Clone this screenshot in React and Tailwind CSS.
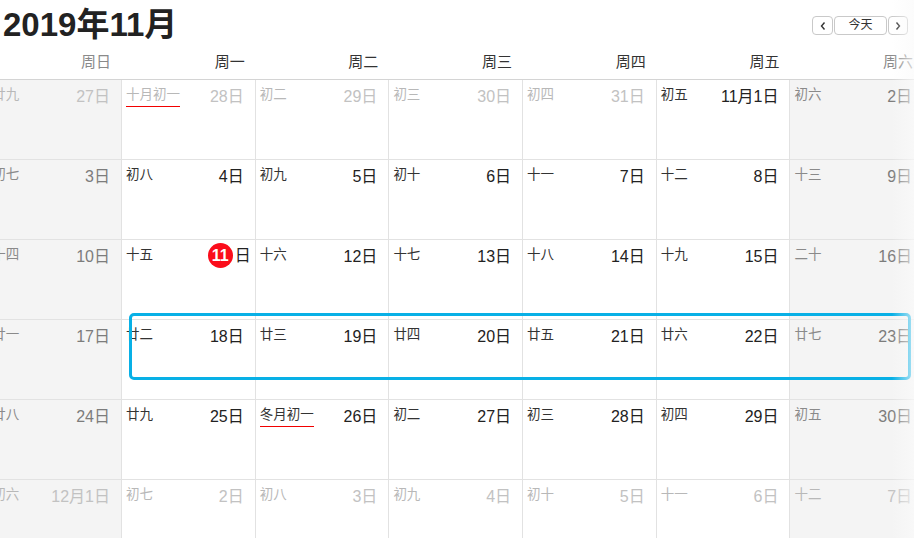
import React from "react";

const weekdays = ["周日", "周一", "周二", "周三", "周四", "周五", "周六"];

// [lunar, date, inMonth, mark]
const weeks = [
  [["廿九", "27日", false], ["十月初一", "28日", false, "line"], ["初二", "29日", false], ["初三", "30日", false], ["初四", "31日", false], ["初五", "11月1日", true], ["初六", "2日", true]],
  [["初七", "3日", true], ["初八", "4日", true], ["初九", "5日", true], ["初十", "6日", true], ["十一", "7日", true], ["十二", "8日", true], ["十三", "9日", true]],
  [["十四", "10日", true], ["十五", "11日", true, "today"], ["十六", "12日", true], ["十七", "13日", true], ["十八", "14日", true], ["十九", "15日", true], ["二十", "16日", true]],
  [["廿一", "17日", true], ["廿二", "18日", true], ["廿三", "19日", true], ["廿四", "20日", true], ["廿五", "21日", true], ["廿六", "22日", true], ["廿七", "23日", true]],
  [["廿八", "24日", true], ["廿九", "25日", true], ["冬月初一", "26日", true, "line"], ["初二", "27日", true], ["初三", "28日", true], ["初四", "29日", true], ["初五", "30日", true]],
  [["初六", "12月1日", false], ["初七", "2日", false], ["初八", "3日", false], ["初九", "4日", false], ["初十", "5日", false], ["十一", "6日", false], ["十二", "7日", false]],
];

const font = { fontFamily: '"Liberation Sans", "Noto Sans CJK SC", sans-serif' };

function Cell({ day, col }) {
  const [lunar, date, inMonth, mark] = day;
  const weekend = col === 0 || col === 6;

  let lunarColor = "text-[#333]";
  let dateColor = "text-[#222]";
  if (!inMonth) {
    lunarColor = "text-[#b8b8b8]";
    dateColor = "text-[#c2c2c2]";
  } else if (weekend) {
    lunarColor = "text-[#8a8a8a]";
    dateColor = "text-[#7c7c7c]";
  }

  return (
    <div
      className={
        "h-[80px] border-l border-b border-[#e2e2e2] flex justify-between " +
        (weekend ? "bg-[#f4f4f4]" : "bg-white")
      }
    >
      <div className="pl-[4px] pt-[2px]">
        <div className={"inline-flex flex-col text-[13.5px] leading-[16px] " + lunarColor}>
          <span>{lunar}</span>
          {mark === "line" && <div className="h-[1px] mt-[3px] bg-[#f20000]" />}
        </div>
      </div>
      {mark === "today" ? (
        <div className="pr-[4px] pt-[3px]">
          <div className="flex items-center">
            <span className="w-[25px] h-[25px] rounded-full bg-[#fb0d1b] text-white font-bold text-[16px] flex items-center justify-center">
              11
            </span>
            <span className="text-[16px] leading-[20px] text-[#222] ml-[2px]">日</span>
          </div>
        </div>
      ) : (
        <div className="pr-[11px] pt-[5px]">
          <span className={"text-[16px] leading-[20px] " + dateColor}>{date}</span>
        </div>
      )}
    </div>
  );
}

export default function App() {
  return (
    <div className="relative w-[914px] h-[538px] overflow-hidden bg-white" style={font}>
      <div className="flex justify-between items-start h-[50px]">
        <h1 className="pl-[3px] mt-[5px] text-[33px] leading-[40px] font-bold text-[#222]">2019年11月</h1>
        <div className="flex gap-[1px] mt-[16px] mr-[6px] text-[12px] text-[#333]">
          <button className="w-[21px] h-[19px] border border-[#c9c9c9] rounded-[4px] bg-white flex items-center justify-center">
            <svg width="8" height="10" viewBox="0 0 8 10">
              <path d="M5.5 1.5 L2.5 5 L5.5 8.5" fill="none" stroke="#333" strokeWidth="1.4" />
            </svg>
          </button>
          <button className="w-[53px] h-[19px] border border-[#c9c9c9] rounded-[4px] bg-white leading-[17px]">今天</button>
          <button className="w-[20px] h-[19px] border border-[#c9c9c9] rounded-[4px] bg-white flex items-center justify-center">
            <svg width="8" height="10" viewBox="0 0 8 10">
              <path d="M2.5 1.5 L5.5 5 L2.5 8.5" fill="none" stroke="#333" strokeWidth="1.4" />
            </svg>
          </button>
        </div>
      </div>

      <div className="ml-[-12.7px] w-[936px]">
        <div className="grid grid-cols-[repeat(7,133.7px)] h-[30px] border-b border-[#d4d4d4]">
          {weekdays.map((w, i) => (
            <div
              key={w}
              className={
                "flex items-center justify-end pr-[10px] pb-[5px] text-[15px] " +
                (i === 0 || i === 6 ? "text-[#8a8a8a]" : "text-[#333]")
              }
            >
              {w}
            </div>
          ))}
        </div>
        <div className="grid grid-cols-[repeat(7,133.7px)]">
          {weeks.map((week, r) =>
            week.map((day, c) => <Cell key={r + "-" + c} day={day} col={c} />)
          )}
        </div>
      </div>

      {/* selected week */}
      <div className="absolute left-[129px] top-[313px] w-[782px] h-[67px] border-[3px] border-[#08b0e6] rounded-[5px] pointer-events-none" />

      {/* right edge fade */}
      <div className="absolute right-0 top-0 bottom-0 w-[22px] bg-linear-to-r from-transparent to-[#fafafa]/70 pointer-events-none" />
    </div>
  );
}
